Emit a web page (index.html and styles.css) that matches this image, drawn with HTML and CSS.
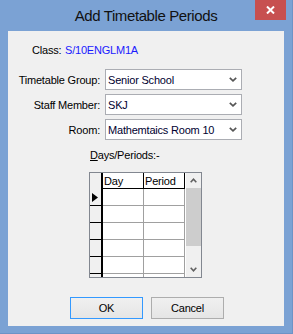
FILE: index.html
```html
<!DOCTYPE html>
<html lang="en">
<head>
  <meta charset="UTF-8" />
  <title>Add Timetable Periods</title>
  <link rel="stylesheet" href="styles.css">
</head>
<body>
  <div class="window">
    <div class="titlebar">
      <span class="title">Add Timetable Periods</span>
      <div class="close">
        <svg width="9" height="8" viewBox="0 0 9 8">
          <path d="M1 0.5 L8 7.5 M8 0.5 L1 7.5" stroke="#fff" stroke-width="2" />
        </svg>
      </div>
    </div>

    <div class="client">
      <div class="class-row">
        <span class="class-label">Class:</span>
        <span class="class-value">S/10ENGLM1A</span>
      </div>

      <div class="form">
        <label>Timetable Group:</label>
        <div class="combo"><span>Senior School</span><svg class="chev" width="8" height="5" viewBox="0 0 8 5"><path d="M0.8 0.8 L4 3.8 L7.2 0.8" fill="none" stroke="#555" stroke-width="1.7" /></svg></div>

        <label>Staff Member:</label>
        <div class="combo"><span>SKJ</span><svg class="chev" width="8" height="5" viewBox="0 0 8 5"><path d="M0.8 0.8 L4 3.8 L7.2 0.8" fill="none" stroke="#555" stroke-width="1.7" /></svg></div>

        <label>Room:</label>
        <div class="combo"><span>Mathemtaics Room 10</span><svg class="chev" width="8" height="5" viewBox="0 0 8 5"><path d="M0.8 0.8 L4 3.8 L7.2 0.8" fill="none" stroke="#555" stroke-width="1.7" /></svg></div>
      </div>

      <div class="days-label"><u>D</u>ays/Periods:-</div>

      <div class="gridbox">
        <div class="cells">
          <div class="hd ind"></div>
          <div class="hd">Day</div>
          <div class="hd">Period</div>

          <div class="ind"><svg width="6" height="9" viewBox="0 0 6 9"><path d="M0 0 L6 4.5 L0 9 Z" fill="#000" /></svg></div>
          <div class="cell"></div>
          <div class="cell"></div>

          <div class="ind"></div>
          <div class="cell"></div>
          <div class="cell"></div>

          <div class="ind"></div>
          <div class="cell"></div>
          <div class="cell"></div>

          <div class="ind"></div>
          <div class="cell"></div>
          <div class="cell"></div>

          <div class="ind"></div>
          <div class="cell"></div>
          <div class="cell"></div>

          <div class="ind"></div>
          <div class="cell"></div>
          <div class="cell"></div>
        </div>
        <div class="vscroll">
          <div class="sbtn"><svg width="7" height="5" viewBox="0 0 7 5"><path d="M0.7 4.2 L3.5 1.2 L6.3 4.2" fill="none" stroke="#606060" stroke-width="1.6" /></svg></div>
          <div class="track"><div class="thumb"></div></div>
          <div class="sbtn"><svg width="7" height="5" viewBox="0 0 7 5"><path d="M0.7 0.8 L3.5 3.8 L6.3 0.8" fill="none" stroke="#606060" stroke-width="1.6" /></svg></div>
        </div>
      </div>

      <div class="buttons">
        <button class="btn default">OK</button>
        <button class="btn">Cancel</button>
      </div>
    </div>
  </div>
</body>
</html>
```

FILE: styles.css
```css
body {
  margin: 0;
  background: #7ba2d4;
  font-family: "Liberation Sans", Arial, sans-serif;
  font-size: 11px;
  color: #000;
}

.window {
  width: 293px;
  height: 334px;
  box-sizing: border-box;
  padding: 0 8px 7px 8px;
  display: flex;
  flex-direction: column;
  position: relative;
  border-right: 1px solid #6d93c6;
  border-bottom: 1px solid #6d93c6;
}

.titlebar {
  height: 31px;
  display: flex;
  align-items: center;
  justify-content: center;
  padding-bottom: 1px;
  box-sizing: border-box;
}

.title {
  font-size: 15px;
  letter-spacing: -0.4px;
  color: #111;
}

.close {
  position: absolute;
  top: 0;
  right: 6px;
  width: 31px;
  height: 20px;
  background: #c75050;
  display: flex;
  align-items: center;
  justify-content: center;
}

.client {
  flex: 1;
  background: #f0f0f0;
  letter-spacing: -0.2px;
}

.class-row {
  padding: 13px 0 0 24px;
  line-height: 13px;
  display: flex;
}

.class-label {
  width: 33px;
}

.class-value {
  color: #1a1aff;
}

.form {
  margin-top: 12px;
  display: grid;
  grid-template-columns: 92px 137px;
  grid-auto-rows: 21px;
  column-gap: 5px;
  row-gap: 4px;
}

.form label {
  text-align: right;
  align-self: center;
}

.combo {
  background: #fff;
  border: 1px solid #abadb3;
  box-sizing: border-box;
  display: flex;
  align-items: center;
  justify-content: space-between;
  padding: 0 4px 0 2px;
  color: #000030;
}

.days-label {
  margin-top: 9px;
  padding-left: 82px;
  line-height: 13px;
}

.gridbox {
  margin: 10px 0 0 81px;
  width: 113px;
  height: 106px;
  box-sizing: border-box;
  border: 1px solid #828790;
  background: #fff;
  display: flex;
}

.cells {
  width: 96px;
  height: 104px;
  overflow: hidden;
  display: grid;
  grid-template-columns: 13px 41px 41px;
  grid-template-rows: 16px;
  grid-auto-rows: 17px;
  align-content: start;
  background: linear-gradient(to right, #f0f0f0 11px, transparent 11px);
}

.cells > div {
  box-sizing: border-box;
}

.hd {
  border-right: 1px solid #000;
  border-bottom: 1px solid #000;
  padding: 1px 0 0 1px;
  line-height: 14px;
}

.hd.ind {
  border-bottom: none;
}

.ind {
  background: #f0f0f0;
  border-right: 2px solid #000;
  border-bottom: 1px solid #000;
  display: flex;
  align-items: center;
  padding-left: 2px;
}

.cell {
  border-right: 1px solid #a0a0a0;
  border-bottom: 1px solid #a0a0a0;
}

.vscroll {
  width: 15px;
  background: #f0f0f0;
  display: flex;
  flex-direction: column;
}

.sbtn {
  height: 15px;
  display: flex;
  align-items: center;
  justify-content: center;
}

.track {
  flex: 1;
}

.thumb {
  height: 58px;
  background: #cdcdcd;
}

.buttons {
  margin: 19px 0 0 62px;
  display: flex;
  gap: 8px;
}

.btn {
  width: 73px;
  height: 22px;
  font-family: "Liberation Sans", Arial, sans-serif;
  font-size: 11px;
  letter-spacing: -0.2px;
  color: #000;
  background: linear-gradient(#f0f0f0, #e5e5e5);
  border: 1px solid #adadad;
  padding: 0;
}

.btn.default {
  border-color: #3399ff;
}
```
